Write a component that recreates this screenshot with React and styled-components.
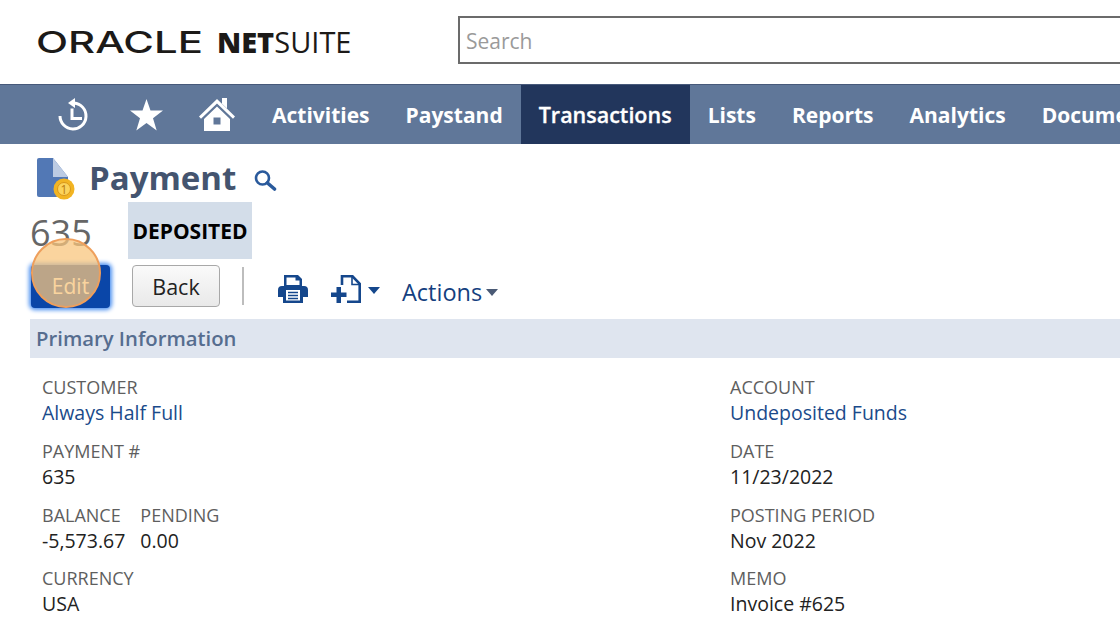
import React from 'react';
import styled, { createGlobalStyle } from 'styled-components';

const GlobalStyle = createGlobalStyle`
	html, body {
		margin: 0;
		padding: 0;
		width: 1120px;
		height: 630px;
		overflow: hidden;
		background: #fff;
		font-family: "Open Sans", "Liberation Sans", sans-serif;
	}
`;

const Page = styled.div`
	position: relative;
	width: 1120px;
	height: 630px;
	overflow: hidden;
`;

const TopBar = styled.header`
	display: flex;
	align-items: center;
	height: 84px;
	padding-left: 36px;
	box-sizing: border-box;
`;

const Logo = styled.svg`
	display: block;
	width: 318px;
	height: 34px;
	flex: none;
	overflow: visible;
`;

const SearchBox = styled.div`
	flex: none;
	width: 700px;
	height: 48px;
	margin-left: 104px;
	margin-top: -4px;
	border: 2px solid #6b6b6b;
	box-sizing: border-box;
	padding: 2px 0 0 6px;
	display: flex;
	align-items: center;
	font-size: 21px;
	color: #9a9a9a;
`;

const NavBar = styled.nav`
	display: flex;
	height: 60px;
	background: #607799;
	border-top: 1px solid #47597a;
	box-sizing: border-box;
	padding-left: 40px;
`;

const NavIcon = styled.div`
	width: ${(p) => p.$w}px;
	flex: none;
	display: flex;
	align-items: center;
	justify-content: center;
`;

const NavItem = styled.div`
	flex: none;
	padding: 0 18px;
	display: flex;
	align-items: center;
	font-size: ${(p) => (p.$active ? 21.5 : 21)}px;
	font-weight: ${(p) => (p.$active ? 600 : 700)};
	-webkit-text-stroke: ${(p) => (p.$active ? '0.3px #fff' : '0')};
	color: #fff;
	background: ${(p) => (p.$active ? '#22365c' : 'transparent')};
`;

const TitleRow = styled.div`
	display: flex;
	align-items: center;
	height: 58px;
	box-sizing: border-box;
	padding: 11px 0 0 37px;
`;

const Title = styled.h1`
	margin: 0 0 3px 12px;
	font-size: 33px;
	font-weight: 700;
	color: #44546f;
`;

const TitleSearch = styled.span`
	display: flex;
	margin: 3px 0 0 18px;
`;

const StatusRow = styled.div`
	display: flex;
	align-items: center;
	height: 57px;
	padding-left: 30px;
`;

const RecordNumber = styled.div`
	width: 98px;
	font-size: 36px;
	color: #666;
	padding-top: 3px;
`;

const Badge = styled.div`
	height: 57px;
	width: 124px;
	background: #d3dde9;
	display: flex;
	align-items: center;
	justify-content: center;
	font-size: 21px;
	font-weight: 700;
	color: #000;
`;

const ButtonRow = styled.div`
	display: flex;
	align-items: center;
	height: 60px;
	box-sizing: border-box;
	padding: 0 0 6px 31px;
`;

const EditButton = styled.div`
	width: 79px;
	height: 43px;
	box-sizing: border-box;
	background: #0a46a8;
	border-radius: 4px;
	box-shadow: 0 0 4px 2px #4a8ff0;
	display: flex;
	align-items: center;
	justify-content: center;
	font-size: 21px;
	color: #fff;
`;

const BackButton = styled.div`
	width: 88px;
	height: 42px;
	margin-left: 22px;
	box-sizing: border-box;
	background: linear-gradient(#fafafa, #e9e9e9);
	border: 1px solid #a8a8a8;
	border-radius: 4px;
	display: flex;
	align-items: center;
	justify-content: center;
	font-size: 21.5px;
	color: #222;
`;

const Divider = styled.div`
	width: 2px;
	height: 38px;
	margin-left: 22px;
	background: #bdbdbd;
`;

const ToolSlot = styled.span`
	display: flex;
	flex: none;
	margin-left: ${(p) => p.$ml}px;
	margin-top: 6px;
`;

const ActionsLabel = styled.div`
	margin-left: 22px;
	margin-top: 12px;
	font-size: 23.5px;
	color: #153f7f;
`;

const Caret = styled.span`
	flex: none;
	width: 0;
	height: 0;
	margin-left: ${(p) => p.$ml}px;
	margin-top: ${(p) => p.$mt}px;
	border-left: 6px solid transparent;
	border-right: 6px solid transparent;
	border-top: 7px solid ${(p) => p.$color};
`;

const SectionHeader = styled.div`
	margin-left: 30px;
	height: 39px;
	padding: 0 0 2px 6px;
	box-sizing: border-box;
	background: #dfe5ef;
	display: flex;
	align-items: center;
	font-size: 20.3px;
	font-weight: 600;
	color: #566d8f;
`;

const Fields = styled.div`
	display: grid;
	grid-template-columns: 688px 1fr;
	padding: 16px 0 0 42px;
`;

const FieldColumn = styled.div`
	display: flex;
	flex-direction: column;
`;

const FieldRow = styled.div`
	display: flex;
	gap: 15px;
	height: 63.8px;
`;

const Field = styled.div`
	display: flex;
	flex-direction: column;
`;

const Label = styled.div`
	font-size: 18px;
	line-height: 26px;
	color: #5e5e5e;
`;

const Value = styled.div`
	font-size: 19.5px;
	line-height: 26px;
	color: ${(p) => (p.$link ? '#1a4a8a' : '#222')};
`;

const Highlight = styled.div`
	position: absolute;
	left: 31px;
	top: 238px;
	width: 70px;
	height: 70px;
	box-sizing: border-box;
	border-radius: 50%;
	background: rgba(248, 198, 125, 0.75);
	border: 2px solid #ee9f5c;
`;

const HistoryIcon = () => (
	<svg width="31" height="33" viewBox="0 0 31 33" fill="none" stroke="#fff" strokeWidth="3">
		<path d="M16 5A13 13 0 1 1 2 18" />
		<path d="M17 0v10L10 5z" fill="#fff" stroke="none" />
		<path d="M14 10.500V20.500H24" />
	</svg>
);

const StarIcon = () => (
	<svg width="33" height="32" viewBox="0 0 33 32">
		<path d="M16.5 0l4 11.6H33l-10 7.6 3.7 12.3-10.2-7.4-10.2 7.4L10 19.2 0 11.6h12.5z" fill="#fff" />
	</svg>
);

const HomeIcon = () => (
	<svg width="36" height="33" viewBox="0 0 36 33">
		<path d="M18 1L36 18.500l-2 2.300L18 5.600 2 20.800 0 18.500z" fill="#fff" />
		<path d="M23 0h5v10.500l-5-4.800z" fill="#fff" />
		<path fillRule="evenodd" d="M18 8.500L31 21v12H5V21zM14.500 19.500v7h7v-7z" fill="#fff" />
	</svg>
);

const DocIcon = () => (
	<svg width="40" height="42" viewBox="0 0 40 42">
		<path d="M2 0h14l15 19v20H2a2 2 0 0 1-2-2V2a2 2 0 0 1 2-2z" fill="#5278b5" />
		<path d="M16 0l15 19H16z" fill="#bccbe3" />
		<circle cx="27" cy="31" r="10.500" fill="#f2b422" />
		<circle cx="27" cy="31" r="6.500" fill="#fbd35c" stroke="#d9971a" />
		<text x="27" y="35.500" textAnchor="middle" fontSize="12" fontFamily="'Open Sans', sans-serif" fill="#b87a10">1</text>
	</svg>
);

const SearchIcon = () => (
	<svg width="23" height="21" viewBox="0 0 23 21" fill="none" stroke="#2a5a9c">
		<circle cx="8.500" cy="8" r="6.500" strokeWidth="2.600" />
		<path d="M13.500 13l7 6" strokeWidth="3.600" strokeLinecap="round" />
	</svg>
);

const PrintIcon = () => (
	<svg width="30" height="28" viewBox="0 0 30 28">
		<path
			fillRule="evenodd"
			fill="#15478c"
			d="M6 0h14l4 4v7h2a4 4 0 0 1 4 4v7h-5v6H5v-6H0v-7a4 4 0 0 1 4-4h2zM8.500 2.500V10h13V5.500h-4v-3zM8 15v10.500h14V15z"
		/>
		<path d="M10 17.500h10M10 20.500h10M10 23.500h10" stroke="#15478c" strokeWidth="1.400" />
	</svg>
);

const NewDocIcon = () => (
	<svg width="30" height="28" viewBox="0 0 30 28">
		<path d="M11 10V1.300h10.500l7.200 7.500v17.900H16" fill="none" stroke="#15478c" strokeWidth="2.600" />
		<path d="M21 1v8.500h8" fill="none" stroke="#15478c" strokeWidth="1.600" />
		<path d="M5.500 12h4.500v5.500H15.500v4.500H10v6H5.500v-6H0v-4.500h5.500z" fill="#15478c" />
	</svg>
);

const navItems = ['Activities', 'Paystand', 'Transactions', 'Lists', 'Reports', 'Analytics', 'Documents'];

const leftFields = [
	[{ label: 'CUSTOMER', value: 'Always Half Full', link: true }],
	[{ label: 'PAYMENT #', value: '635' }],
	[
		{ label: 'BALANCE', value: '-5,573.67' },
		{ label: 'PENDING', value: '0.00' },
	],
	[{ label: 'CURRENCY', value: 'USA' }],
];

const rightFields = [
	[{ label: 'ACCOUNT', value: 'Undeposited Funds', link: true }],
	[{ label: 'DATE', value: '11/23/2022' }],
	[{ label: 'POSTING PERIOD', value: 'Nov 2022' }],
	[{ label: 'MEMO', value: 'Invoice #625' }],
];

const renderColumn = (rows) => (
	<FieldColumn>
		{rows.map((row) => (
			<FieldRow key={row[0].label}>
				{row.map((f) => (
					<Field key={f.label}>
						<Label>{f.label}</Label>
						<Value $link={f.link}>{f.value}</Value>
					</Field>
				))}
			</FieldRow>
		))}
	</FieldColumn>
);

const App = () => (
	<Page>
		<GlobalStyle />
		<TopBar>
			<Logo viewBox="0 0 318 34">
				<text
					x="0"
					y="28"
					fontFamily="Inter, sans-serif"
					fontSize="30"
					fontWeight="500"
					fill="#1c1a18"
					textLength="167"
					lengthAdjust="spacingAndGlyphs"
				>
					ORACLE
				</text>
				<text x="181" y="28" fontFamily="'Open Sans', sans-serif" fontSize="29" fill="#1c1a18">
					<tspan fontWeight="800">NET</tspan>
					<tspan fontWeight="400">SUITE</tspan>
				</text>
			</Logo>
			<SearchBox>Search</SearchBox>
		</TopBar>

		<NavBar>
			<NavIcon $w={66}><HistoryIcon /></NavIcon>
			<NavIcon $w={80}><StarIcon /></NavIcon>
			<NavIcon $w={62}><HomeIcon /></NavIcon>
			<NavIcon $w={6} />
			{navItems.map((item) => (
				<NavItem key={item} $active={item === 'Transactions'}>{item}</NavItem>
			))}
		</NavBar>

		<TitleRow>
			<DocIcon />
			<Title>Payment</Title>
			<TitleSearch><SearchIcon /></TitleSearch>
		</TitleRow>

		<StatusRow>
			<RecordNumber>635</RecordNumber>
			<Badge>DEPOSITED</Badge>
		</StatusRow>

		<ButtonRow>
			<EditButton>Edit</EditButton>
			<BackButton>Back</BackButton>
			<Divider />
			<ToolSlot $ml={34}><PrintIcon /></ToolSlot>
			<ToolSlot $ml={23}><NewDocIcon /></ToolSlot>
			<Caret $ml={7} $mt={8} $color="#15478c" />
			<ActionsLabel>Actions</ActionsLabel>
			<Caret $ml={4} $mt={12} $color="#4a5a75" />
		</ButtonRow>

		<SectionHeader>Primary Information</SectionHeader>

		<Fields>
			{renderColumn(leftFields)}
			{renderColumn(rightFields)}
		</Fields>

		<Highlight />
	</Page>
);

export default App;
